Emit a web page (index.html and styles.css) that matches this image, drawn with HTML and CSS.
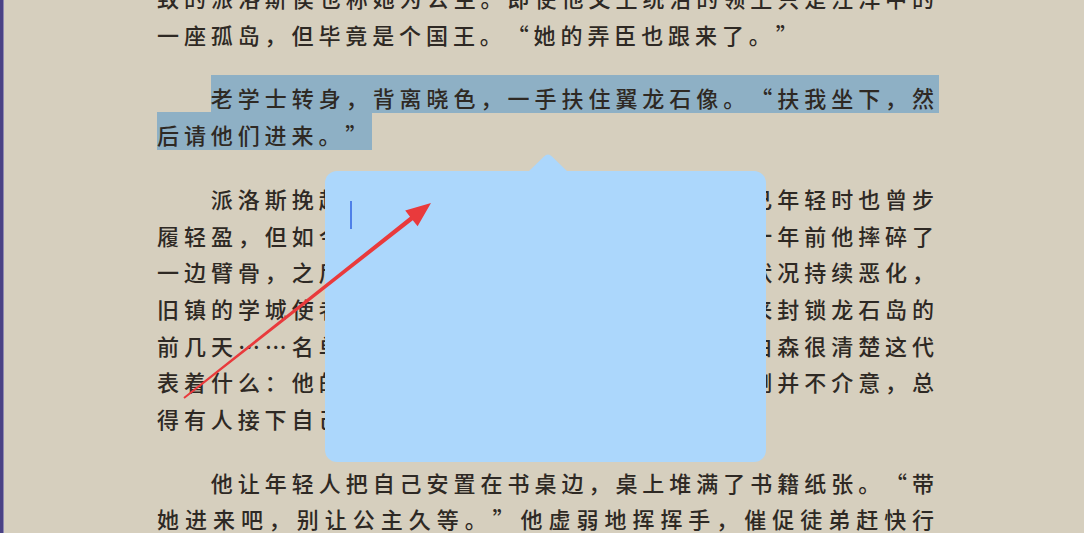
FILE: index.html
```html
<!DOCTYPE html>
<html lang="zh-CN">
<head>
<meta charset="utf-8">
<title>阅读</title>
<link rel="stylesheet" href="styles.css">
</head>
<body>
<main class="page">
  <article class="reader">
    <p class="para cont">致的派洛斯侯也称她为公主。即使他父王统治的领土只是汪洋中的一座孤岛，但毕竟是个国王。“她的弄臣也跟来了。”</p>
    <p class="para"><span class="sel">老学士转身，背离晓色，一手扶住翼龙石像。“扶我坐下，然后请他们进来。”</span></p>
    <p class="para">派洛斯挽起袖子，露出枯瘦的手臂。他记得自己年轻时也曾步履轻盈，但如今连走几步路都要人搀扶。大约在二十年前他摔碎了一边臂骨，之后便一直没能完全康复，近年来身体状况持续恶化，旧镇的学城使者送来了信函，就在黑水湾的舰队前来封锁龙石岛的前几天……名单上已经写好了继任者的名字，吉尔伯森很清楚这代表着什么：他的时日已经所剩不多了。对此老学士倒并不介意，总得有人接下自己肩上的担子。</p>
    <p class="para">他让年轻人把自己安置在书桌边，桌上堆满了书籍纸张。“带她进来吧，别让公主久等。”他虚弱地挥挥手，催促徒弟赶快行动。</p>
  </article>

  <div class="note">
    <svg class="note-tip" viewBox="0 0 40 19" width="40" height="19" aria-hidden="true">
      <path d="M0 19 L16 3.5 Q20 -0.5 24 3.5 L40 19 Z" fill="#acd7fc"/>
    </svg>
    <span class="caret"></span>
  </div>

  <svg class="annot" viewBox="0 0 1084 533" width="1084" height="533" aria-hidden="true">
    <polygon fill="#e93a3c" points="183.4,397.2 410,216.8 405.2,210.6 431,203 417.6,226.3 412.8,220.2 184.6,398.8"/>
  </svg>
</main>
</body>
</html>
```

FILE: styles.css
```css
html, body {
  margin: 0;
  height: 100%;
}

body {
  background: #d6cfbe;
  overflow: hidden;
}

.page {
  position: relative;
  height: 533px;
  box-sizing: border-box;
  border-left: 3px solid #4a4285;
  box-shadow: inset 1px 0 0 #8f89b0;
  overflow: hidden;
}

.reader {
  width: 782px;
  margin: -21px 0 0 154px;
  font-family: "Noto Sans CJK SC", "Noto Sans", sans-serif;
  font-size: 22px;
  font-weight: 500;
  line-height: 36.7px;
  letter-spacing: 4.9px;
  color: #2e2924;
  text-align: justify;
  text-spacing-trim: space-all;
}

.para {
  margin: 0 0 27px;
  text-indent: 53.8px;
}

.para.cont {
  text-indent: 0;
}

.sel {
  background: #8eb0c5;
  padding: 6px 0 0;
}

.note {
  position: absolute;
  left: 322px;
  top: 171px;
  width: 441px;
  height: 291px;
  background: #acd7fc;
  border-radius: 12px;
}

.note-tip {
  position: absolute;
  left: 203px;
  top: -18px;
  display: block;
}

.caret {
  position: absolute;
  left: 25px;
  top: 30px;
  width: 2px;
  height: 28px;
  background: #4f80e8;
}

.annot {
  position: absolute;
  left: -3px;
  top: 0;
  pointer-events: none;
}
```
